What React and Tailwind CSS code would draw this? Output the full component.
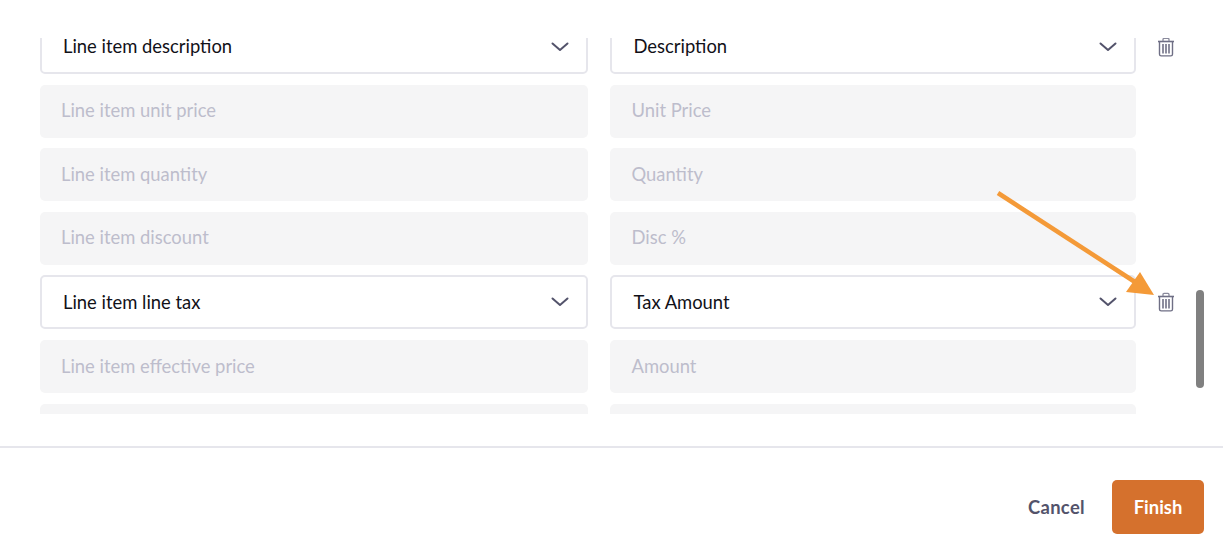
import React from "react";

function Chevron() {
  return (
    <svg width="18" height="10" viewBox="0 0 18 10" fill="none" className="shrink-0">
      <path d="M1.5 1.5 L9 8 L16.5 1.5" stroke="#53536b" strokeWidth="2" strokeLinecap="round" strokeLinejoin="round" />
    </svg>
  );
}

function Trash() {
  return (
    <svg width="18" height="20" viewBox="0 0 18 20" fill="none">
      <path d="M1 4.5 H17" stroke="#6f6f85" strokeWidth="1.6" />
      <path d="M6 4 V2.4 C6 1.8 6.4 1.4 7 1.4 H11 C11.6 1.4 12 1.8 12 2.4 V4" stroke="#8a8a9c" strokeWidth="1.3" />
      <path d="M2.5 4.5 V17.2 C2.5 18.2 3.2 18.9 4.2 18.9 H13.8 C14.8 18.9 15.5 18.2 15.5 17.2 V4.5" stroke="#6f6f85" strokeWidth="1.4" />
      <path d="M6 7 V16.5 M9 7 V16.5 M12 7 V16.5" stroke="#7a7a8e" strokeWidth="1.7" />
    </svg>
  );
}

function SelectBox({ text, className }) {
  return (
    <div className={`${className} h-[54px] rounded-[5px] border-2 border-[#e6e6ec] bg-white flex items-center justify-between pr-[17px] text-[18.4px] text-[#111118]`}>
      <span>{text}</span>
      <Chevron />
    </div>
  );
}

function Disabled({ text, className }) {
  return (
    <div className={`${className} h-[53px] rounded-[5px] bg-[#f5f5f6] flex items-center text-[18.4px] text-[#bdbdcc]`}>
      {text}
    </div>
  );
}

const rows = [
  ["Line item description", "Description", true],
  ["Line item unit price", "Unit Price", false],
  ["Line item quantity", "Quantity", false],
  ["Line item discount", "Disc %", false],
  ["Line item line tax", "Tax Amount", true],
  ["Line item effective price", "Amount", false],
  ["", "", false],
];

export default function App() {
  return (
    <div className="relative w-[1223px] h-[550px] overflow-hidden bg-white" style={{ fontFamily: '"Lato", "Noto Sans", sans-serif' }}>
      <div className="relative h-[414px] pt-[38px]">
        <div className="h-[376px] overflow-hidden">
          <div className="flex flex-col gap-[10.6px] mt-[-18px] ml-[40px]">
            {rows.map(([a, b, sel], i) => (
              <div key={i} className="flex items-center">
                {sel ? <SelectBox text={a} className="w-[548px] pl-[21px]" /> : <Disabled text={a} className="w-[548px] pl-[21px]" />}
                {sel ? <SelectBox text={b} className="w-[526px] ml-[22px] pl-[21.5px]" /> : <Disabled text={b} className="w-[526px] ml-[22px] pl-[21.5px]" />}
                {sel && (
                  <div className="ml-[21px]">
                    <Trash />
                  </div>
                )}
              </div>
            ))}
          </div>
        </div>
        <div className="absolute left-[1196px] top-[290px] w-[8px] h-[98px] rounded-full bg-[#808080]" />
      </div>
      <div className="mt-[32px] h-[2px] bg-[#e6e6ec]" />
      <div className="flex items-center justify-end gap-[27px] pt-[32px] pr-[19px]">
        <span className="pt-[2px] text-[18.4px] font-bold tracking-[0.35px] text-[#53536b]">Cancel</span>
        <div className="w-[92px] h-[54px] rounded-[5px] bg-[#d5712d] flex items-center justify-center pt-[2px] text-[18.4px] font-bold text-white">Finish</div>
      </div>
      <svg className="absolute left-[990px] top-[185px]" width="170" height="115" viewBox="0 0 170 115" fill="none">
        <path d="M8 8 L145 97" stroke="#f49a38" strokeWidth="4.5" />
        <path d="M150 87 L164 110 L136 107 Z" fill="#f49a38" />
      </svg>
    </div>
  );
}
